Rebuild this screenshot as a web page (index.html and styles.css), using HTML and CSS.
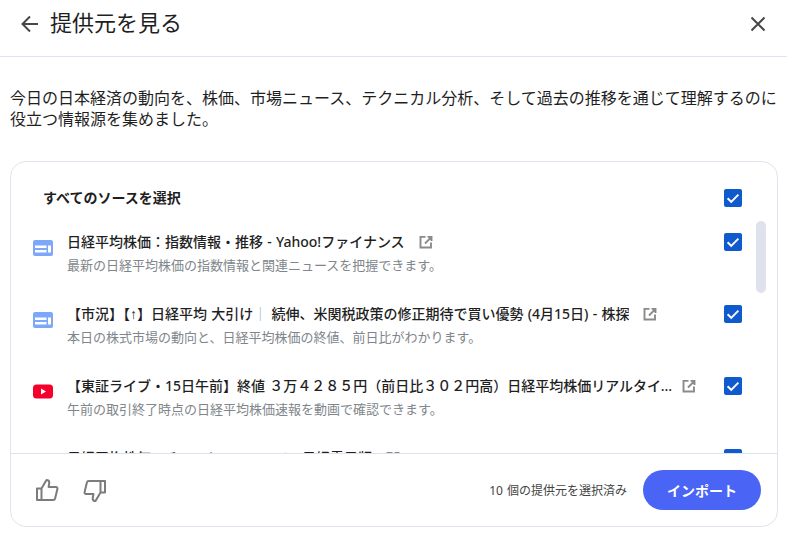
FILE: index.html
```html
<!DOCTYPE html>
<html lang="ja">
<head>
<meta charset="utf-8">
<title>提供元を見る</title>
<link rel="stylesheet" href="styles.css">
</head>
<body>
<svg class="defs" width="0" height="0" aria-hidden="true">
  <symbol id="ext" viewBox="0 0 16 16"><path d="M7.500 2.900H2.500V13.500H13V8.500M9.500 2.900h4V7M13.500 2.900 7 9.500" fill="none" stroke="currentColor" stroke-width="1.900"/></symbol>
  <symbol id="check" viewBox="0 0 18 18"><rect width="18" height="18" rx="2" fill="#0f5bcd"/><path d="M3.600 9.300 7.200 12.800 14.400 5.600" fill="none" stroke="#fff" stroke-width="1.900"/></symbol>
  <symbol id="web" viewBox="0 0 20 18"><rect width="20" height="16" y="1" rx="2" fill="#7da7f8"/><rect x="2" y="6.500" width="11.500" height="2.500" fill="#fff"/><rect x="2" y="11" width="11.500" height="2.500" fill="#fff"/><rect x="15" y="6.500" width="3" height="7" fill="#fff"/></symbol>
</svg>
<header class="top">
  <button class="icon-btn back" aria-label="戻る"><svg width="24" height="24" viewBox="0 0 24 24"><path d="M20 12H5M12 4.500 4.500 12l7.500 7.500" fill="none" stroke="#474747" stroke-width="2"/></svg></button>
  <h1 class="title">提供元を見る</h1>
  <button class="icon-btn close" aria-label="閉じる"><svg width="24" height="24" viewBox="0 0 24 24"><path d="M5.500 5.500l13 13M18.500 5.500l-13 13" fill="none" stroke="#474747" stroke-width="2"/></svg></button>
</header>
<p class="intro">今日の日本経済の動向を、株価、市場ニュース、テクニカル分析、そして過去の推移を通じて理解するのに役立つ情報源を集めました。</p>
<section class="card">
  <div class="list">
    <div class="all"><span class="all-label">すべてのソースを選択</span><svg class="box"><use href="#check"/></svg></div>
    <div class="row">
      <svg class="src"><use href="#web"/></svg>
      <div class="body">
        <div class="name"><span class="name-text">日経平均株価：指数情報・推移 - Yahoo!ファイナンス</span><svg class="ext"><use href="#ext"/></svg></div>
        <div class="desc">最新の日経平均株価の指数情報と関連ニュースを把握できます。</div>
      </div>
      <svg class="box"><use href="#check"/></svg>
    </div>
    <div class="row">
      <svg class="src"><use href="#web"/></svg>
      <div class="body">
        <div class="name"><span class="name-text">【市況】【<span class="arrow">↑</span>】日経平均 大引け<span class="bar">｜</span> 続伸、米関税政策の修正期待で買い優勢 (4月15日) - 株探</span><svg class="ext"><use href="#ext"/></svg></div>
        <div class="desc">本日の株式市場の動向と、日経平均株価の終値、前日比がわかります。</div>
      </div>
      <svg class="box"><use href="#check"/></svg>
    </div>
    <div class="row">
      <svg class="src" viewBox="0 0 20 18"><rect y="1.500" width="20" height="14" rx="3.500" fill="#f5002c"/><path d="M8 5.500v6l5-3z" fill="#fff"/></svg>
      <div class="body">
        <div class="name clipped"><span class="name-text">【東証ライブ・15日午前】終値 ３万４２８５円（前日比３０２円高）日経平均株価リアルタイムチャート</span><svg class="ext"><use href="#ext"/></svg></div>
        <div class="desc">午前の取引終了時点の日経平均株価速報を動画で確認できます。</div>
      </div>
      <svg class="box"><use href="#check"/></svg>
    </div>
    <div class="row">
      <svg class="src"><use href="#web"/></svg>
      <div class="body">
        <div class="name"><span class="name-text">日経平均株価 - チャート・ニュース - 日経電子版</span><svg class="ext"><use href="#ext"/></svg></div>
      </div>
      <svg class="box"><use href="#check"/></svg>
    </div>
    <div class="thumb"></div>
  </div>
  <footer class="foot">
    <button class="thumb-btn" aria-label="高評価"><svg width="26" height="26" viewBox="0 0 26 26"><path d="M3 11.500h4.500V23H3zM7.500 11.500 12.500 3c1.800 0 2.800 1 2.800 2.600L14.600 10H22c1 0 1.700.9 1.400 2l-2.300 9.500c-.2 1-1 1.500-1.900 1.500H7.500" fill="none" stroke="#7c7c7c" stroke-width="2" stroke-linejoin="round"/></svg></button>
    <button class="thumb-btn dislike" aria-label="低評価"><svg width="26" height="26" viewBox="0 0 26 26"><path d="M23 14.500h-4.500V3H23zM18.500 14.500 13.500 23c-1.800 0-2.800-1-2.800-2.600l.7-4.400H4c-1 0-1.700-.9-1.400-2l2.300-9.500C5.100 3.500 5.900 3 6.800 3h11.700" fill="none" stroke="#7c7c7c" stroke-width="2" stroke-linejoin="round"/></svg></button>
    <span class="count">10 個の提供元を選択済み</span>
    <button class="import">インポート</button>
  </footer>
</section>
</body>
</html>
```
FILE: styles.css
```css
* { box-sizing: border-box; }
html, body { margin: 0; height: 100%; overflow: hidden; background: #fff; }
body {
  font-family: "Noto Sans", "Noto Sans CJK JP", sans-serif;
  color: #1f1f1f;
  padding: 0 9px 8px 10px;
  display: flex;
  flex-direction: column;
}
.defs { position: absolute; }
button { border: 0; background: none; padding: 0; font: inherit; }
.top {
  height: 57px;
  flex: none;
  margin: 0 -9px 0 -10px;
  padding: 0 17px 8px 18px;
  border-bottom: 1px solid #e1e3f1;
  display: flex;
  align-items: center;
}
.icon-btn { width: 24px; height: 24px; display: flex; }
.title { margin: -4px 0 0 8px; flex: 1; font-size: 22px; line-height: 28px; font-weight: 400; }
.intro { margin: 31px 0 31px; font-size: 16px; line-height: 21px; color: #1f1f1f; }
.card {
  flex: 1;
  min-height: 0;
  border: 1px solid #e1e3ee;
  border-radius: 16px;
  display: flex;
  flex-direction: column;
  overflow: hidden;
}
.list { position: relative; flex: 1; min-height: 0; overflow: hidden; padding: 27px 35px 0 22px; }
.all { display: flex; align-items: center; justify-content: space-between; height: 18px; padding-left: 10px; }
.all-label { font-size: 14px; font-weight: 700; margin-top: -2px; }
.box { width: 18px; height: 18px; flex: none; }
.row { display: flex; align-items: flex-start; height: 72px; margin-top: 26px; }
.row + .row { margin-top: 0; }
.src { width: 20px; height: 18px; flex: none; margin-top: 6px; }
.body { flex: 1; min-width: 0; margin: 0 27px 0 14px; }
.name { display: flex; align-items: center; height: 20px; margin-top: -2px; font-size: 14px; font-weight: 500; }
.name-text { white-space: nowrap; overflow: hidden; text-overflow: ellipsis; min-width: 0; word-spacing: 0.6px; }
.arrow { font-family: "Liberation Sans", sans-serif; font-weight: 400; }
.bar { color: #8fb0d8; font-weight: 400; }
.ext { width: 16px; height: 16px; flex: none; margin: 2px 0 0 13px; color: #8a8a8a; }
.clipped .ext { margin-left: 8px; }
.desc { margin-top: 4px; font-size: 13px; line-height: 20px; color: #80868b; white-space: nowrap; }
.thumb { position: absolute; left: 745px; top: 59px; width: 10px; height: 72px; border-radius: 5px; background: #dfe2ec; }
.foot {
  flex: none;
  height: 73px;
  border-top: 1px solid #dfe1ec;
  padding: 0 16px 0 23px;
  display: flex;
  align-items: center;
}
.thumb-btn { width: 26px; height: 26px; margin-right: 22px; display: flex; }
.dislike { margin-top: 2px; }
.count { margin-left: auto; font-size: 12px; color: #444; word-spacing: 1px; }
.import {
  margin-left: 16px;
  width: 118px;
  height: 40px;
  border-radius: 20px;
  background: #4a64f6;
  color: #fff;
  font-size: 14px;
  font-weight: 700;
}
```
